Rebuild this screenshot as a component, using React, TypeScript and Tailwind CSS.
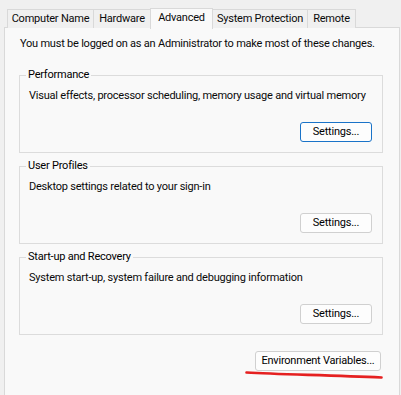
import React from "react";

const tabs = [
  { label: "Computer Name", w: "w-[87px]" },
  { label: "Hardware", w: "w-[58px]" },
  { label: "Advanced", w: "w-[63px]", active: true },
  { label: "System Protection", w: "w-[96px]" },
  { label: "Remote", w: "w-[49px]" },
];

function Group({
  title,
  desc,
  focused,
}: {
  title: string;
  desc: string;
  focused?: boolean;
}) {
  return (
    <fieldset className="ml-[14px] w-[364px] min-w-0 h-[86px] border border-[#dcdcdc] px-[9px] pb-[10px]">
      <legend className="-ml-[3px] px-[2px] leading-[16px] text-black whitespace-nowrap">{title}</legend>
      <div className="h-[59px] flex flex-col justify-between">
        <div className="mt-[5px] leading-[16px] whitespace-nowrap">{desc}</div>
        <div className="flex justify-end mr-[1px]">
          <button
            className={
              focused
                ? "w-[72px] h-[20px] rounded-[3px] border border-[#1a73c8] bg-[#fdfdfd] leading-[16px] text-black whitespace-nowrap"
                : "w-[72px] h-[20px] rounded-[3px] border border-[#d0d0d0] bg-[#fdfdfd] leading-[16px] text-black whitespace-nowrap"
            }
          >
            Settings...
          </button>
        </div>
      </div>
    </fieldset>
  );
}

export default function App() {
  return (
    <div
      className="relative w-[401px] h-[395px] overflow-hidden bg-[#f0f0f0] text-[11px] tracking-[-0.22px] text-[#0a0a0a]"
      style={{ fontFamily: 'Roboto, "Liberation Sans", Arial, sans-serif' }}
    >
      <div className="flex items-end pl-[7px] pt-[7px] h-[28px] relative z-10">
        {tabs.map((t, i) =>
          t.active ? (
            <div
              key={t.label}
              className={`${t.w} -ml-px h-[21px] -mb-px border border-b-0 border-[#d9d9d9] bg-[#f9f9f9] flex items-center justify-center pb-[1px] whitespace-nowrap`}
            >
              {t.label}
            </div>
          ) : (
            <div
              key={t.label}
              className={`${t.w} ${i === 0 ? "" : "-ml-px"} h-[19px] border border-b-0 border-[#d9d9d9] bg-[#f0f0f0] flex items-center justify-center whitespace-nowrap`}
            >
              {t.label}
            </div>
          )
        )}
      </div>
      <div className="ml-[4px] w-[396px] h-[380px] border border-[#d9d9d9] bg-[#f9f9f9] -mt-px">
        <div className="pl-[15px] pt-[8px] leading-[16px] whitespace-nowrap">
          You must be logged on as an Administrator to make most of these changes.
        </div>
        <div className="mt-[15px] flex flex-col gap-[5px]">
          <Group
            title="Performance"
            desc="Visual effects, processor scheduling, memory usage and virtual memory"
            focused
          />
          <Group title="User Profiles" desc="Desktop settings related to your sign-in" />
          <Group
            title="Start-up and Recovery"
            desc="System start-up, system failure and debugging information"
          />
        </div>
        <div className="flex justify-end pr-[18px] mt-[16px]">
          <button className="w-[126px] h-[20px] rounded-[3px] border border-[#d0d0d0] bg-[#fdfdfd] leading-[16px] text-black whitespace-nowrap">
            Environment Variables...
          </button>
        </div>
      </div>
      <svg
        className="absolute left-0 top-0 pointer-events-none"
        width="401"
        height="395"
        viewBox="0 0 401 395"
      >
        <path
          d="M246.5 372.5 C 280 374.5, 330 375, 381.5 377.5"
          stroke="#e52020"
          strokeWidth="2.6"
          fill="none"
          strokeLinecap="round"
        />
      </svg>
    </div>
  );
}
